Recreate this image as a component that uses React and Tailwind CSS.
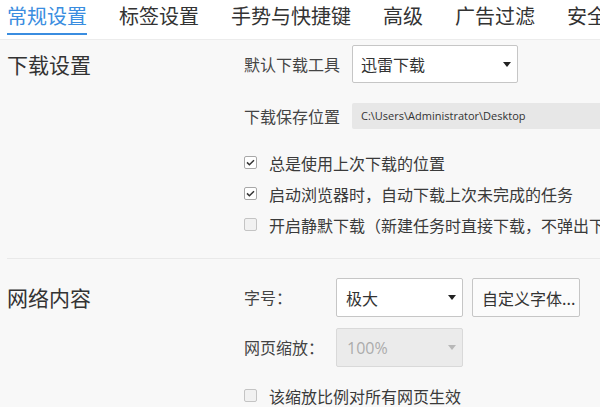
import React from "react";

const CJK = { fontFamily: '"Noto Sans CJK SC", "Noto Sans", sans-serif' };

function Arrow({ disabled }) {
  return (
    <svg width="8" height="5" viewBox="0 0 8 5" className="shrink-0">
      <path d="M0 0 H8 L4 5 Z" fill={disabled ? "#b8b8b8" : "#222"} />
    </svg>
  );
}

function Check({ checked, dim }) {
  return (
    <span
      className={
        "flex h-[13px] w-[13px] shrink-0 items-center justify-center rounded-[2px] border " +
        (checked ? "border-[#a8a8a8] bg-white" : "border-[#c4c4c4] bg-[#f1f1f1]")
      }
    >
      {checked && (
        <svg width="9" height="7" viewBox="0 0 9 7">
          <path d="M1 3.4 L3.4 5.8 L8 1.2" fill="none" stroke="#333" strokeWidth="1.5" />
        </svg>
      )}
    </span>
  );
}

function CheckRow({ checked, children }) {
  return (
    <div className="flex h-[31px] items-center gap-[12px] whitespace-nowrap">
      <Check checked={checked} />
      <span className="text-[16px] leading-[20px] text-[#3a3a3a]">{children}</span>
    </div>
  );
}

export default function App() {
  const tabs = ["常规设置", "标签设置", "手势与快捷键", "高级", "广告过滤", "安全设置"];
  return (
    <div className="h-[407px] w-[600px] overflow-hidden bg-[#f8f8f8]" style={CJK}>
      {/* Tab bar */}
      <div className="flex h-[40px] gap-[32px] whitespace-nowrap border-b border-[#ececec] bg-white pl-[7px]">
        {tabs.map((t, i) => (
          <div
            key={t}
            className={
              "h-[35px] shrink-0 border-b-2 pt-[6px] pb-[7px] text-[20px] leading-[20px] " +
              (i === 0 ? "border-[#3a8de0] text-[#3a8de0]" : "border-transparent text-[#333]")
            }
          >
            {t}
          </div>
        ))}
      </div>

      {/* Download settings */}
      <div className="flex pt-[5px] pb-[18px]">
        <div className="w-[244px] shrink-0 pl-[7px] text-[21px] leading-[38px] text-[#333]">下载设置</div>
        <div className="flex min-w-0 flex-1 flex-col">
          <div className="flex items-center">
            <div className="w-[108px] shrink-0 text-[16px] leading-[38px] text-[#444]">默认下载工具</div>
            <div className="flex h-[38px] w-[166px] items-center justify-between rounded-[2px] border border-[#c6c6c6] bg-white pl-[8px] pr-[6px]">
              <span className="text-[16px] leading-[20px] text-[#333]">迅雷下载</span>
              <Arrow />
            </div>
          </div>
          <div className="mt-[20px] flex items-center">
            <div className="w-[108px] shrink-0 text-[16px] leading-[26px] text-[#444]">下载保存位置</div>
            <div className="flex h-[26px] flex-1 items-center rounded-l-[2px] bg-[#e7e7e7] pl-[9px]">
              <span
                className="whitespace-nowrap text-[11px] text-[#333]"
                style={{ fontFamily: '"Open Sans", "Liberation Sans", sans-serif' }}
              >
                C:\Users\Administrator\Desktop
              </span>
            </div>
          </div>
          <div className="mt-[18px] flex flex-col">
            <CheckRow checked>总是使用上次下载的位置</CheckRow>
            <CheckRow checked>启动浏览器时，自动下载上次未完成的任务</CheckRow>
            <CheckRow>开启静默下载（新建任务时直接下载，不弹出下载框）</CheckRow>
          </div>
        </div>
      </div>

      {/* Web content */}
      <div className="ml-[7px] flex border-t border-[#e9e9e9] pt-[19px]">
        <div className="w-[237px] shrink-0 text-[21px] leading-[39px] text-[#333]">网络内容</div>
        <div className="flex min-w-0 flex-1 flex-col">
          <div className="flex items-center">
            <div className="w-[92px] shrink-0 text-[16px] leading-[39px] text-[#444]">字号：</div>
            <div className="flex h-[39px] w-[127px] items-center justify-between rounded-[2px] border border-[#c6c6c6] bg-white pl-[9px] pr-[6px]">
              <span className="text-[16px] leading-[20px] text-[#333]">极大</span>
              <Arrow />
            </div>
            <div className="ml-[9px] flex h-[39px] w-[108px] items-center rounded-[2px] border border-[#c6c6c6] bg-[#fbfbfb] pl-[9px]">
              <span className="whitespace-nowrap text-[16px] leading-[20px] text-[#333]">自定义字体...</span>
            </div>
          </div>
          <div className="mt-[11px] flex items-center">
            <div className="w-[92px] shrink-0 text-[16px] leading-[39px] text-[#444]">网页缩放：</div>
            <div className="flex h-[39px] w-[127px] items-center justify-between rounded-[2px] border border-[#d9d9d9] bg-[#ebebeb] pl-[10px] pr-[6px]">
              <span
                className="text-[16px] leading-[20px] text-[#ababab]"
                style={{ fontFamily: '"Open Sans", "Liberation Sans", sans-serif' }}
              >
                100%
              </span>
              <Arrow disabled />
            </div>
          </div>
          <div className="mt-[13px]">
            <CheckRow>该缩放比例对所有网页生效</CheckRow>
          </div>
        </div>
      </div>
    </div>
  );
}
